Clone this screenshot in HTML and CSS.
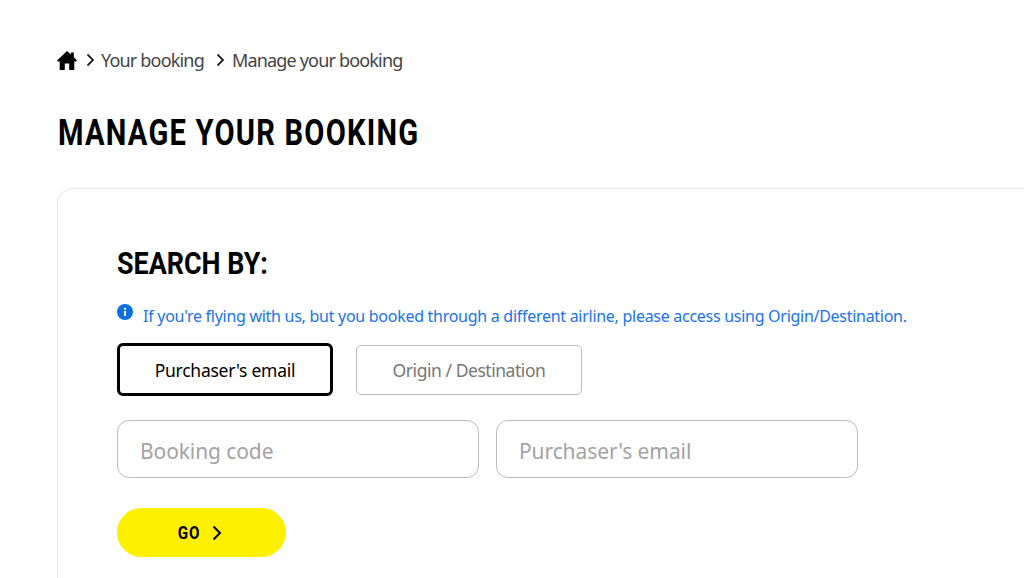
FILE: index.html
```html
<!DOCTYPE html>
<html lang="en">

<head>
    <meta charset="UTF-8">
    <meta name="viewport" content="width=device-width, initial-scale=1.0">
    <title>Manage your booking</title>
    <link rel="stylesheet" href="styles.css">
</head>

<body>
    <main class="page">
        <nav class="breadcrumb">
            <a href="#" class="crumb-home">
                <svg width="20" height="19" viewBox="0 0 20 19"><path d="M10 0 L14 3.6 L14 1.5 L16.8 1.5 L16.8 6.2 L20 9.4 L19 10.5 L17.3 10.5 L17.3 19 L12.2 19 L12.2 12.5 L7.8 12.5 L7.8 19 L2.7 19 L2.7 10.5 L1 10.5 L0 9.4 Z" fill="#000"/></svg>
            </a>
            <svg class="crumb-arrow" width="9" height="14" viewBox="0 0 9 14"><path d="M1.5 1.5 L7 7 L1.5 12.5" fill="none" stroke="#222" stroke-width="1.8"/></svg>
            <a href="#">Your booking</a>
            <svg class="crumb-arrow crumb-arrow-second" width="9" height="14" viewBox="0 0 9 14"><path d="M1.5 1.5 L7 7 L1.5 12.5" fill="none" stroke="#222" stroke-width="1.8"/></svg>
            <a href="#">Manage your booking</a>
        </nav>

        <h1 class="title">MANAGE YOUR BOOKING</h1>

        <section class="card">
            <h2 class="subtitle">SEARCH BY:</h2>
            <p class="info">
                <svg class="info-icon" width="16" height="16" viewBox="0 0 16 16"><circle cx="8" cy="8" r="8" fill="#0b6fe0"/><rect x="7" y="7" width="2" height="5" fill="#fff"/><rect x="7" y="3.8" width="2" height="2" fill="#fff"/></svg>
                <span>If you're flying with us, but you booked through a different airline, please access using Origin/Destination.</span>
            </p>
            <div class="tabs">
                <button class="tab tab-active">Purchaser's email</button>
                <button class="tab">Origin / Destination</button>
            </div>
            <form class="fields">
                <input class="field" type="text" placeholder="Booking code">
                <input class="field" type="text" placeholder="Purchaser's email">
            </form>
            <button class="go">
                <span class="go-label">GO</span>
                <svg width="10" height="16" viewBox="0 0 10 16"><path d="M1.5 1.5 L8 8 L1.5 14.5" fill="none" stroke="#000" stroke-width="2"/></svg>
            </button>
        </section>
    </main>
</body>

</html>
```

FILE: styles.css
```css
html,
body {
    height: 100%;
    overflow: hidden;
}

body {
    font-family: "Noto Sans", Arial, sans-serif;
    margin: 0;
    padding: 0;
    background-color: #fff;
}

.page {
    display: flex;
    flex-direction: column;
    height: 100%;
    padding: 48px 0 0 57px;
    box-sizing: border-box;
}

.breadcrumb {
    display: flex;
    align-items: center;
    height: 24px;
    font-size: 18px;
    letter-spacing: -0.82px;
}

.breadcrumb a {
    color: #444;
    text-decoration: none;
}

.crumb-home {
    display: flex;
    margin-right: 9px;
}

.crumb-arrow {
    margin-right: 6px;
}

.crumb-arrow-second {
    margin-left: 12px;
    margin-right: 7px;
}

/* no condensed font installed, so the headings get squeezed */
.title {
    margin: 39px 0 0 1px;
    font-family: Roboto, sans-serif;
    font-size: 36px;
    line-height: 44px;
    font-weight: 700;
    letter-spacing: 1.5px;
    color: #000;
    white-space: nowrap;
    transform: scaleX(0.81);
    transform-origin: left;
}

.card {
    flex: 1;
    margin-top: 33px;
    padding: 54px 59px 0;
    border: 1px solid #e6e6e6;
    border-right: none;
    border-bottom: none;
    border-radius: 16px 0 0 0;
    box-sizing: border-box;
}

.subtitle {
    margin: 0;
    font-family: Roboto, sans-serif;
    font-size: 32px;
    line-height: 40px;
    font-weight: 700;
    color: #000;
    transform: scaleX(0.84);
    transform-origin: left;
}

.info {
    display: flex;
    margin: 21px 0 0;
    font-size: 16px;
    line-height: 24px;
    letter-spacing: -0.28px;
    color: #1a73e8;
}

.info-icon {
    margin: 0 10px 0 0;
}

.tabs {
    display: flex;
    align-items: center;
    gap: 23px;
    margin-top: 15px;
}

.tab {
    width: 226px;
    height: 50px;
    font-family: inherit;
    font-size: 17.5px;
    letter-spacing: -0.45px;
    color: #777;
    background-color: #fff;
    border: 1px solid #bbb;
    border-radius: 5px;
}

.tab-active {
    width: 216px;
    height: 53px;
    letter-spacing: -0.25px;
    color: #000;
    border: 3px solid #000;
    border-radius: 6px;
}

.fields {
    display: flex;
    gap: 17.5px;
    margin-top: 24px;
}

.field {
    width: 361.5px;
    height: 58px;
    padding: 4px 22px 0;
    box-sizing: border-box;
    font-family: inherit;
    font-size: 21px;
    letter-spacing: -0.1px;
    background-color: #fff;
    border: 1px solid #bbb;
    border-radius: 12px;
}

.field::placeholder {
    color: #a3a3a3;
    opacity: 1;
}

.go {
    display: flex;
    align-items: center;
    justify-content: center;
    gap: 8px;
    width: 169px;
    height: 49px;
    margin-top: 30px;
    padding: 0 6px 0 0;
    color: #000;
    background-color: #fff000;
    border: none;
    border-radius: 25px;
}

.go-label {
    font-family: Roboto, sans-serif;
    font-size: 19px;
    font-weight: 700;
    letter-spacing: 1px;
    transform: scaleX(0.8);
}
```
